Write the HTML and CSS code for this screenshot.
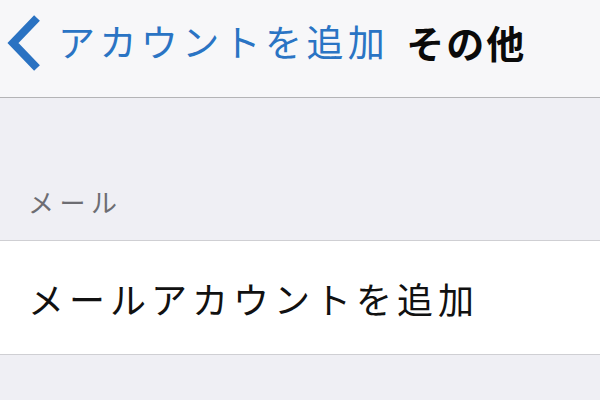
FILE: index.html
```html
<!DOCTYPE html>
<html lang="ja">
<head>
<meta charset="utf-8">
<link rel="stylesheet" href="styles.css">
</head>
<body>
<div class="nav">
  <svg class="chev" width="36" height="60" viewBox="0 0 36 60"><path d="M31 6 L7 31 L31 56" fill="none" stroke="#2a72c2" stroke-width="8" stroke-linejoin="miter"/></svg>
  <span class="back">アカウントを追加</span>
  <span class="title">その他</span>
</div>
<div class="section-head"><span>メール</span></div>
<div class="row"><span>メールアカウントを追加</span></div>
</body>
</html>
```
FILE: styles.css
```css
html, body { margin: 0; padding: 0; }
body {
  width: 600px; height: 400px; overflow: hidden;
  background: #efeff4;
  font-family: "Noto Sans CJK JP", "Noto Sans", sans-serif;
}
.nav {
  background: #f7f7f9;
  border-bottom: 1px solid #b4b4b6;
  display: flex;
  align-items: center;
  padding: 0 0 14px 6px;
  height: 83px;
}
.chev { flex: none; display: block; }
.back {
  margin-left: 16px;
  color: #2a74c4;
  font-size: 37px;
  letter-spacing: 4.4px;
  line-height: 1;
}
.title {
  margin-left: 17px;
  color: #0a0a0a;
  font-size: 38px;
  font-weight: 700;
  letter-spacing: 2px;
  line-height: 1;
}
.section-head {
  height: 143px;
  display: flex;
  align-items: flex-end;
  padding-left: 28px;
  box-sizing: border-box;
  padding-bottom: 25px;
  border-bottom: 1px solid #cfcfd3;
}
.section-head span {
  color: #6d6d72;
  font-size: 26px;
  letter-spacing: 5.5px;
  line-height: 1;
}
.row {
  height: 113px;
  background: #ffffff;
  border-bottom: 1px solid #cfcfd3;
  display: flex;
  align-items: center;
  padding-left: 28px;
}
.row span {
  color: #111;
  font-size: 36px;
  letter-spacing: 5px;
  line-height: 1;
}
```
